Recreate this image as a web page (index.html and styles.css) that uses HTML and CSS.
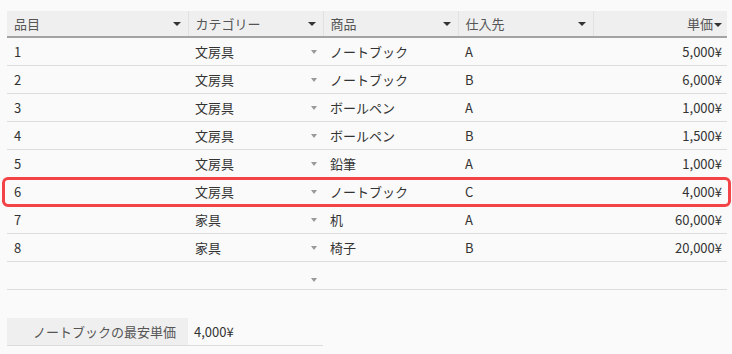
FILE: index.html
```html
<!DOCTYPE html>
<html lang="ja">
<head>
<meta charset="utf-8">
<link rel="stylesheet" href="styles.css">
</head>
<body>
<div class="wrap">
  <table class="grid">
    <colgroup>
      <col class="c1"><col class="c2"><col class="c3"><col class="c4"><col class="c5">
    </colgroup>
    <thead>
      <tr>
        <th><span class="h">品目</span><span class="arr"></span></th>
        <th><span class="h">カテゴリー</span><span class="arr"></span></th>
        <th><span class="h">商品</span><span class="arr"></span></th>
        <th><span class="h">仕入先</span><span class="arr"></span></th>
        <th class="num"><span class="h">単価</span><span class="arr tight"></span></th>
      </tr>
    </thead>
    <tbody>
      <tr><td>1</td><td class="dd">文房具<span class="sarr"></span></td><td>ノートブック</td><td>A</td><td class="num">5,000¥</td></tr>
      <tr><td>2</td><td class="dd">文房具<span class="sarr"></span></td><td>ノートブック</td><td>B</td><td class="num">6,000¥</td></tr>
      <tr><td>3</td><td class="dd">文房具<span class="sarr"></span></td><td>ボールペン</td><td>A</td><td class="num">1,000¥</td></tr>
      <tr><td>4</td><td class="dd">文房具<span class="sarr"></span></td><td>ボールペン</td><td>B</td><td class="num">1,500¥</td></tr>
      <tr><td>5</td><td class="dd">文房具<span class="sarr"></span></td><td>鉛筆</td><td>A</td><td class="num">1,000¥</td></tr>
      <tr><td>6</td><td class="dd">文房具<span class="sarr"></span></td><td>ノートブック</td><td>C</td><td class="num">4,000¥</td></tr>
      <tr><td>7</td><td class="dd">家具<span class="sarr"></span></td><td>机</td><td>A</td><td class="num">60,000¥</td></tr>
      <tr><td>8</td><td class="dd">家具<span class="sarr"></span></td><td>椅子</td><td>B</td><td class="num">20,000¥</td></tr>
      <tr><td></td><td class="dd"><span class="sarr"></span></td><td></td><td></td><td class="num"></td></tr>
    </tbody>
  </table>
  <div class="highlight"></div>

  <table class="summary">
    <tr>
      <th>ノートブックの最安単価</th>
      <td>4,000¥</td>
    </tr>
  </table>
</div>
</body>
</html>
```

FILE: styles.css
```css
html, body {
  margin: 0;
  padding: 0;
  background: #fafafa;
}
body {
  font-family: "Noto Sans CJK JP", "Noto Sans", sans-serif;
  font-size: 13px;
  color: #333;
}
.wrap {
  position: relative;
  padding: 11px 0 0 7px;
}
.grid {
  border-collapse: collapse;
  table-layout: fixed;
  width: 720px;
}
.c1 { width: 181px; }
.c2 { width: 135px; }
.c3 { width: 135px; }
.c4 { width: 135px; }
.c5 { width: 134px; }

.grid th {
  height: 25px;
  padding: 0 7px 0 7px;
  background: #efefef;
  border-bottom: 2px solid #a3a3a3;
  border-left: 1px solid #e2e2e2;
  font-weight: normal;
  text-align: left;
  color: #555;
  vertical-align: middle;
  white-space: nowrap;
}
.grid th:first-child { border-left: none; }
.grid th .h {
  display: inline-block;
}
.grid th .arr {
  float: right;
  width: 0;
  height: 0;
  margin-top: 8px;
  border-left: 4px solid transparent;
  border-right: 4px solid transparent;
  border-top: 4px solid #333;
}
.grid th.num {
  text-align: right;
  padding-right: 5px;
}
.grid th .arr.tight {
  float: none;
  display: inline-block;
  vertical-align: middle;
  margin: 0 0 0 1px;
}
.grid td {
  height: 27px;
  padding: 0 7px;
  border-bottom: 1px solid #dcdcdc;
  vertical-align: middle;
  white-space: nowrap;
  color: #333;
}
.grid td.num {
  text-align: right;
  padding-right: 5px;
}
.grid td.dd {
  position: relative;
}
.sarr {
  float: right;
  width: 0;
  height: 0;
  margin-top: 8px;
  margin-right: -1px;
  border-left: 3.5px solid transparent;
  border-right: 3.5px solid transparent;
  border-top: 4px solid #9a9a9a;
}
.highlight {
  position: absolute;
  left: 2px;
  top: 177px;
  width: 723px;
  height: 24px;
  border: 3px solid #f44347;
  border-radius: 6px;
  pointer-events: none;
}
.summary {
  margin-top: 28px;
  border-collapse: collapse;
  table-layout: fixed;
  width: 316px;
}
.summary th {
  width: 181px;
  box-sizing: border-box;
  height: 27px;
  padding: 0 12px 0 0;
  background: #efefef;
  font-weight: normal;
  text-align: right;
  color: #555;
  border-bottom: 1px solid #dcdcdc;
  vertical-align: middle;
}
.summary td {
  height: 27px;
  padding: 0 6px;
  border-bottom: 1px solid #dcdcdc;
  vertical-align: middle;
}
```
